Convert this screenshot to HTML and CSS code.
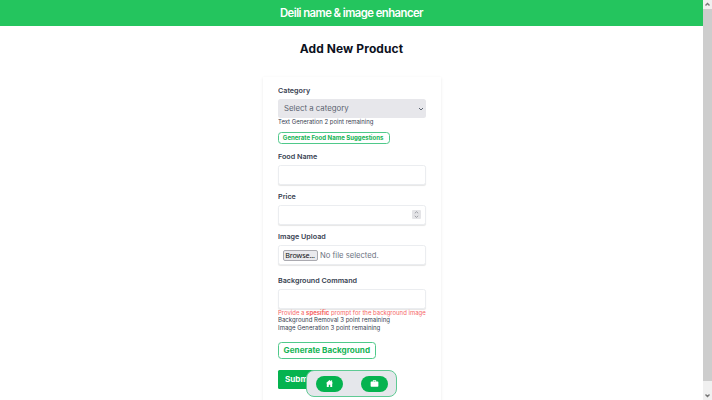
FILE: index.html
```html
<!DOCTYPE html>
<html lang="en">
<head>
<meta charset="utf-8">
<title>Deili name &amp; image enhancer</title>
<link rel="stylesheet" href="styles.css">
</head>
<body>
<div class="window">
  <div class="page">
    <header class="header"><span class="brand">Deili name &amp; image enhancer</span></header>
    <h1 class="title">Add New Product</h1>
    <form class="card">
      <label class="label l-category">Category</label>
      <div class="select"><span class="select-text">Select a category</span>
        <svg class="chevron" viewBox="0 0 6 4"><path d="M1 1l2 2 2-2"/></svg>
      </div>
      <p class="hint h-text">Text Generation 2 point remaining</p>
      <button type="button" class="suggest"><span>Generate Food Name Suggestions</span></button>
      <label class="label l-food">Food Name</label>
      <div class="field"></div>
      <label class="label l-price">Price</label>
      <div class="field number">
        <svg class="spinner" viewBox="0 0 9 9"><rect width="9" height="9" rx="1"/><path d="M2.8 3.3l1.7-1.6 1.7 1.6M2.8 5.8l1.7 1.6 1.7-1.6"/></svg>
      </div>
      <label class="label l-image">Image Upload</label>
      <div class="field file"><span class="browse">Browse...</span><span class="file-text">No file selected.</span></div>
      <label class="label l-command">Background Command</label>
      <div class="field last"></div>
      <p class="hint warn">Provide a <b>spesific</b> prompt for the background image</p>
      <p class="hint h-removal">Background Removal 3 point remaining</p>
      <p class="hint h-generation">Image Generation 3 point remaining</p>
      <button type="button" class="generate"><span>Generate Background</span></button>
      <button type="button" class="submit"><span>Submit</span></button>
    </form>
  </div>
  <div class="scrollbar">
    <div class="arrow"><svg viewBox="0 0 9 9"><path d="M2.5 5.4l2-2 2 2"/></svg></div>
    <div class="thumb"></div>
    <div class="arrow down"><svg viewBox="0 0 9 9"><path d="M2.5 3.5l2 2 2-2"/></svg></div>
  </div>
  <nav class="dock">
    <a class="pill"><svg viewBox="0 0 10 10"><path d="M5 1L1 4.8h1V9h2.2V6.3h1.6V9H8V4.8h1L7.9 3.7V1.5h-1v1.3z"/></svg></a>
    <a class="pill"><svg viewBox="0 0 10 10"><path fill-rule="evenodd" d="M3.2 2.7V1.3h3.6v1.4h1.7q.8 0 .8.8v4.2q0 .8-.8.8h-7q-.8 0-.8-.8V3.5q0-.8.8-.8zM4 2.7h2v-.6H4z"/></svg></a>
  </nav>
</div>
</body>
</html>
```
FILE: styles.css
```css
* { box-sizing: border-box; }
body { margin: 0; font-family: Inter, "Open Sans", sans-serif; background: #fff; overflow: hidden; }
.window { display: flex; width: 712px; height: 400px; position: relative; overflow: hidden; }
.page { flex: 1; height: 400px; overflow: hidden; }
.header { height: 26px; background: #24c55e; display: flex; align-items: center; justify-content: center; color: #fff; }
.brand { font: 600 11.3px/16px Inter, sans-serif; letter-spacing: -0.55px; white-space: nowrap; }
.title { margin: 15px 0 0; height: 16px; font-size: 11.2px; line-height: 16px; font-weight: 700; letter-spacing: 0.1px; text-align: center; color: #0c111d; transform: scaleX(1.07); }
.card { width: 178px; height: 340px; margin: 20px auto 0 262.6px; padding: 9px 15px 0; box-shadow: 0 1px 3px rgba(0,0,0,.09); display: flex; flex-direction: column; align-items: flex-start; }
.label { height: 9px; line-height: 9px; font-size: 6.8px; font-weight: 600; color: #374151; flex: none; white-space: nowrap; transform: scaleX(1.055); transform-origin: left; }
.select { width: 148px; height: 19px; margin-top: 4px; padding: 0 2px 0 6px; background: #e7e7eb; border-radius: 2.5px; display: flex; align-items: center; justify-content: space-between; flex: none; }
.select-text { font-size: 7.4px; color: #5b6370; transform: scaleX(1.055); transform-origin: left; }
.chevron { width: 6px; height: 4px; fill: none; stroke: #4b5563; stroke-width: .9; }
.hint { margin: 0; height: 7.5px; font-size: 5.7px; line-height: 7.5px; color: #374151; white-space: nowrap; flex: none; transform: scaleX(1.065); transform-origin: left; }
.h-text, .warn { transform: scaleX(1.05); }
.suggest { height: 12px; width: 112px; margin: 6.5px 0 0; padding: 0; border: 1px solid #4fc98a; border-radius: 3.5px; background: #fff; color: #16b455; font: 700 5.8px/10px Inter, sans-serif; text-align: center; white-space: nowrap; flex: none; }
.suggest span, .generate span, .submit span { display: inline-block; transform: scaleX(1.045); }
.l-food { margin-top: 7.5px; }
.field { width: 148px; height: 20px; margin-top: 4px; background: #fff; border: 1px solid #ebedf0; border-radius: 2.5px; box-shadow: 0 1px 1px rgba(0,0,0,.1); display: flex; align-items: center; flex: none; }
.l-price { margin-top: 7px; }
.number { justify-content: flex-end; padding-right: 4px; }
.spinner { width: 9px; height: 9px; fill: #e4e4e7; }
.spinner path { fill: none; stroke: #8b8e94; stroke-width: .8; }
.l-image { margin-top: 7.5px; }
.file { padding-left: 4px; gap: 2px; }
.browse { width: 35px; height: 11px; border: 1px solid #aaaab0; border-radius: 2px; background: #e9e9ed; color: #111; font: 7.2px/9px "Noto Sans", sans-serif; letter-spacing: -.1px; text-align: center; white-space: nowrap; }
.file-text { font-size: 7.4px; color: #6b7280; white-space: nowrap; transform: scaleX(1.035); transform-origin: left; }
.l-command { margin-top: 11px; }
.last { margin-top: 3.5px; }
.warn { color: #f56565; }
.generate { width: 98px; height: 17px; margin: 11px 0 0; padding: 0; border: 1px solid #4fc98a; border-radius: 3.5px; background: #fff; color: #16b455; font: 700 7.5px/15px Inter, sans-serif; text-align: center; white-space: nowrap; flex: none; }
.generate span { transform: scaleX(1.085); }
.submit { width: 45px; height: 19px; margin: 10.5px 0 0; padding: 0 0 0 7px; border: 0; border-radius: 1.5px; background: #05b34f; color: #fff; font: 700 7.5px/19px Inter, sans-serif; text-align: left; flex: none; }
.submit span { transform: scaleX(1.08); transform-origin: left; }
.scrollbar { width: 9px; height: 400px; display: flex; flex-direction: column; background: #f0f0f0; }
.arrow { height: 9px; display: flex; }
.arrow svg { width: 9px; height: 9px; fill: none; stroke: #777; stroke-width: 1.4; }
.thumb { height: 372px; background: #cdcdcd; }
.down { height: 19px; align-items: flex-end; }
.dock { position: absolute; left: 306px; top: 370px; width: 91px; height: 27px; border: 1px solid #5fca94; border-radius: 8px; background: #e5e7eb; display: flex; align-items: center; justify-content: space-between; padding: 0 8.5px; }
.pill { width: 27px; height: 16px; border-radius: 8px; background: #05b34f; display: flex; align-items: center; justify-content: center; }
.pill svg { width: 9px; height: 9px; fill: #fff; }
```
